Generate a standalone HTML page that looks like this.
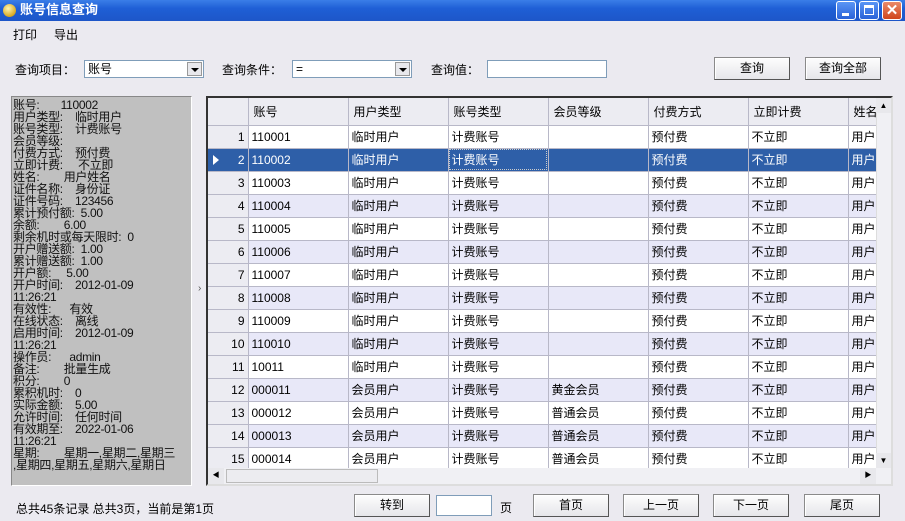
<!DOCTYPE html>
<html><head><meta charset="utf-8"><style>
*{margin:0;padding:0;box-sizing:border-box}
body{width:905px;height:521px;overflow:hidden;background:#ebeaf0;font-family:"Liberation Sans","Noto Sans CJK SC","WenQuanYi Zen Hei",sans-serif;font-size:12px;color:#000;position:relative}
.a{position:absolute;white-space:nowrap}
.title{left:0;top:0;width:905px;height:21px;background:linear-gradient(#3a7ee8,#1f5fd6 40%,#1d56c8);color:#fff;font-weight:bold;font-size:13px;line-height:20px;padding-left:20px}
.tb{top:1px;width:20px;height:19px;border:1px solid #fff;border-radius:3px;background:linear-gradient(#5a95f5,#2a62d8)}
.btn{height:23px;border:1px solid #8a8a8a;border-right-color:#555;border-bottom-color:#555;background:linear-gradient(#fdfdfd,#e6e6ea);text-align:center;line-height:21px;box-shadow:inset 1px 1px 0 #fff}
.combo{height:18px;border:1px solid #7f9db9;background:#fff;padding-left:3px;line-height:16px}
.combo i{position:absolute;right:1px;top:1px;width:15px;height:14px;background:#e8e8ec;border:1px solid #999}
.combo i:after{content:"";position:absolute;left:3px;top:5px;border:4px solid transparent;border-top:4px solid #000;border-bottom:0}
.info{left:11px;top:96px;width:181px;height:390px;background:#c0c0c0;border:1px solid #888;border-right-color:#fff;border-bottom-color:#fff;padding:2px 0 0 1px;font-size:12px;line-height:12px;color:#111;white-space:pre;letter-spacing:-0.3px}
.grid{left:206px;top:96px;width:687px;height:390px;border:2px solid #333;border-right-color:#ddd;border-bottom-color:#ddd;background:#fff;overflow:hidden}
table{border-collapse:collapse;table-layout:fixed;position:absolute;left:0;top:0}
td{height:23px;border-right:1px solid #b8b8c8;border-bottom:1px solid #b8b8c8;padding-left:3px;overflow:hidden;white-space:nowrap}
tr.h td{height:27px;background:#ececf2;padding-left:5px}
td.n{background:#ececf2;text-align:right;padding-right:3px}
tr.e td{background:#e8e8f8}
tr.e td.n{background:#ececf2}
tr.s td{background:#2e5fa8;color:#fff}
tr.s td.n{background:#2e5fa8}
</style></head><body>
<div class="a title">账号信息查询</div>
<div class="a" style="left:3px;top:4px;width:13px;height:13px;border-radius:50%;background:radial-gradient(circle at 40% 35%,#fff6b0,#d8a820 70%,#8a6a10)"></div>
<div class="a tb" style="left:836px"><div class="a" style="left:5px;top:11px;width:7px;height:3px;background:#fff"></div></div>
<div class="a tb" style="left:859px"><div class="a" style="left:4px;top:3px;width:10px;height:10px;border:1px solid #fff;border-top-width:3px"></div></div>
<div class="a tb" style="left:882px;background:linear-gradient(#e98a6a,#d0461c);color:#fff;font-weight:bold;text-align:center;line-height:17px;font-size:15px">✕</div>
<div class="a" style="left:13px;top:26px">打印</div>
<div class="a" style="left:54px;top:26px">导出</div>
<div class="a" style="left:15px;top:61px">查询项目：</div>
<div class="a combo" style="left:84px;top:60px;width:120px">账号<i></i></div>
<div class="a" style="left:222px;top:61px">查询条件：</div>
<div class="a combo" style="left:292px;top:60px;width:120px">=<i></i></div>
<div class="a" style="left:431px;top:61px">查询值：</div>
<div class="a combo" style="left:487px;top:60px;width:120px"></div>
<div class="a btn" style="left:714px;top:57px;width:76px">查询</div>
<div class="a btn" style="left:805px;top:57px;width:76px">查询全部</div>
<div class="a info">账号:       110002
用户类型:    临时用户
账号类型:    计费账号
会员等级:
付费方式:    预付费
立即计费:     不立即
姓名:        用户姓名
证件名称:    身份证
证件号码:    123456
累计预付额:  5.00
余额:        6.00
剩余机时或每天限时:  0
开户赠送额:  1.00
累计赠送额:  1.00
开户额:     5.00
开户时间:    2012-01-09
11:26:21
有效性:      有效
在线状态:    离线
启用时间:    2012-01-09
11:26:21
操作员:      admin
备注:        批量生成
积分:        0
累积机时:    0
实际金额:    5.00
允许时间:    任何时间
有效期至:    2022-01-06
11:26:21
星期:        星期一,星期二,星期三
,星期四,星期五,星期六,星期日</div>
<div class="a" style="left:198px;top:283px;font-size:10px;color:#555">›</div>
<div class="a grid">
<table style="width:700px">
<colgroup><col style="width:40px"><col style="width:100px"><col style="width:100px"><col style="width:100px"><col style="width:100px"><col style="width:100px"><col style="width:100px"><col style="width:60px"></colgroup>
<tr class="h"><td></td><td>账号</td><td>用户类型</td><td>账号类型</td><td>会员等级</td><td>付费方式</td><td>立即计费</td><td>姓名</td></tr>
<tr><td class="n">1</td><td>110001</td><td>临时用户</td><td>计费账号</td><td></td><td>预付费</td><td>不立即</td><td>用户</td></tr>
<tr class="s"><td class="n" style="position:relative"><span style="position:absolute;left:5px;top:6px;border:5px solid transparent;border-left:6px solid #fff;border-right:0"></span>2</td><td>110002</td><td>临时用户</td><td style="outline:1px dotted #ccc;outline-offset:-2px">计费账号</td><td></td><td>预付费</td><td>不立即</td><td>用户</td></tr>
<tr><td class="n">3</td><td>110003</td><td>临时用户</td><td>计费账号</td><td></td><td>预付费</td><td>不立即</td><td>用户</td></tr>
<tr class="e"><td class="n">4</td><td>110004</td><td>临时用户</td><td>计费账号</td><td></td><td>预付费</td><td>不立即</td><td>用户</td></tr>
<tr><td class="n">5</td><td>110005</td><td>临时用户</td><td>计费账号</td><td></td><td>预付费</td><td>不立即</td><td>用户</td></tr>
<tr class="e"><td class="n">6</td><td>110006</td><td>临时用户</td><td>计费账号</td><td></td><td>预付费</td><td>不立即</td><td>用户</td></tr>
<tr><td class="n">7</td><td>110007</td><td>临时用户</td><td>计费账号</td><td></td><td>预付费</td><td>不立即</td><td>用户</td></tr>
<tr class="e"><td class="n">8</td><td>110008</td><td>临时用户</td><td>计费账号</td><td></td><td>预付费</td><td>不立即</td><td>用户</td></tr>
<tr><td class="n">9</td><td>110009</td><td>临时用户</td><td>计费账号</td><td></td><td>预付费</td><td>不立即</td><td>用户</td></tr>
<tr class="e"><td class="n">10</td><td>110010</td><td>临时用户</td><td>计费账号</td><td></td><td>预付费</td><td>不立即</td><td>用户</td></tr>
<tr><td class="n">11</td><td>10011</td><td>临时用户</td><td>计费账号</td><td></td><td>预付费</td><td>不立即</td><td>用户</td></tr>
<tr class="e"><td class="n">12</td><td>000011</td><td>会员用户</td><td>计费账号</td><td>黄金会员</td><td>预付费</td><td>不立即</td><td>用户</td></tr>
<tr><td class="n">13</td><td>000012</td><td>会员用户</td><td>计费账号</td><td>普通会员</td><td>预付费</td><td>不立即</td><td>用户</td></tr>
<tr class="e"><td class="n">14</td><td>000013</td><td>会员用户</td><td>计费账号</td><td>普通会员</td><td>预付费</td><td>不立即</td><td>用户</td></tr>
<tr><td class="n">15</td><td>000014</td><td>会员用户</td><td>计费账号</td><td>普通会员</td><td>预付费</td><td>不立即</td><td>用户</td></tr>
</table>
<div class="a" style="left:668px;top:0;width:15px;height:370px;background:#f0f0f4;border-left:1px solid #ddd"></div>
<div class="a" style="left:668px;top:0;width:15px;height:15px;background:#e8e8ec;text-align:center;font-size:8px;line-height:15px">▲</div>
<div class="a" style="left:668px;top:355px;width:15px;height:15px;background:#e8e8ec;text-align:center;font-size:8px;line-height:15px">▼</div>
<div class="a" style="left:0;top:370px;width:683px;height:16px;background:#f0f0f4"></div>
<div class="a" style="left:0;top:370px;width:16px;height:16px;background:#e8e8ec;text-align:center;font-size:7px;line-height:16px">◀</div>
<div class="a" style="left:18px;top:371px;width:152px;height:14px;background:#ececf0;border:1px solid #bbb"></div>
<div class="a" style="left:652px;top:370px;width:16px;height:16px;background:#e8e8ec;text-align:center;font-size:7px;line-height:16px">▶</div>
</div>
<div class="a" style="left:16px;top:500px">总共45条记录 总共3页，当前是第1页</div>
<div class="a btn" style="left:354px;top:494px;width:76px">转到</div>
<div class="a combo" style="left:436px;top:495px;width:56px;height:21px"></div>
<div class="a" style="left:500px;top:499px">页</div>
<div class="a btn" style="left:533px;top:494px;width:76px">首页</div>
<div class="a btn" style="left:623px;top:494px;width:76px">上一页</div>
<div class="a btn" style="left:713px;top:494px;width:76px">下一页</div>
<div class="a btn" style="left:804px;top:494px;width:76px">尾页</div>
</body></html>
